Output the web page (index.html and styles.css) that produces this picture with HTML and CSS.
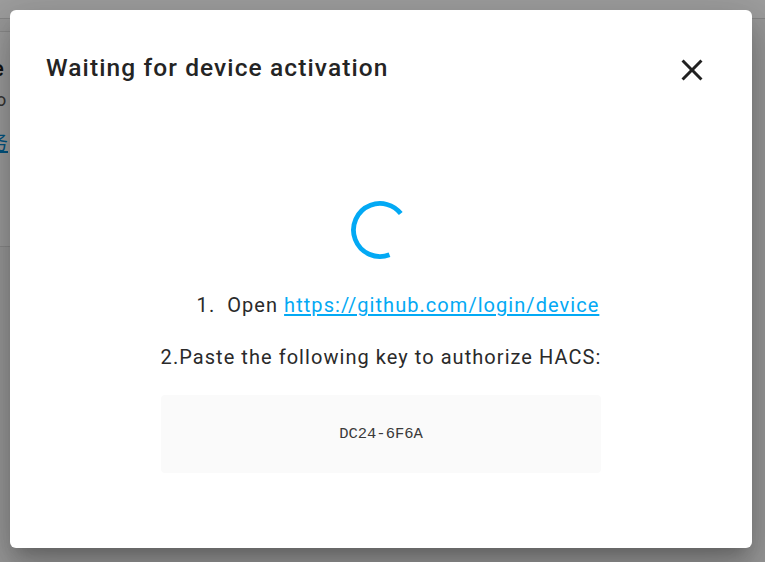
FILE: index.html
```html
<!DOCTYPE html>
<html lang="en">
<head>
<meta charset="utf-8">
<title>Waiting for device activation</title>
<link rel="stylesheet" href="styles.css">
</head>
<body>
<div class="page">
  <div class="page-top"></div>
  <div class="page-card">
    <div class="bg-title">e</div>
    <div class="bg-sub">ro</div>
    <div class="bg-link">务</div>
  </div>
</div>
<div class="scrim"></div>
<div class="dialog" role="dialog">
  <div class="dialog-header">
    <h2 class="dialog-title">Waiting for device activation</h2>
    <button class="close-btn" aria-label="Close">
      <svg viewBox="0 0 24 24" width="36" height="36"><path d="M19,6.41L17.59,5L12,10.59L6.41,5L5,6.41L10.59,12L5,17.59L6.41,19L12,13.41L17.59,19L19,17.59L13.41,12L19,6.41Z"/></svg>
    </button>
  </div>
  <div class="dialog-content">
    <div class="spinner">
      <svg viewBox="0 0 60 60" width="60" height="60">
        <circle cx="30" cy="30" r="26.5" fill="none" stroke="#03a9f4" stroke-width="4.8" stroke-dasharray="116 200" transform="rotate(69 30 30)"/>
      </svg>
    </div>
    <div class="steps">
      <p class="step step-one">1.&nbsp;&nbsp;Open <a href="#">https://github.com/login/device</a></p>
      <p class="step">2.Paste the following key to authorize HACS:</p>
      <div class="code-box"><code>DC24-6F6A</code></div>
    </div>
  </div>
</div>
</body>
</html>
```

FILE: styles.css
```css
html, body {
  margin: 0;
  padding: 0;
  height: 100%;
  overflow: hidden;
}
body {
  background: #f0f0f0;
  font-family: Roboto, "Noto Sans", "Noto Sans CJK SC", sans-serif;
}
.page {
  height: 100%;
  background: #f6f6f6;
}
.page-top {
  height: 18px;
  border-bottom: 1px solid #d8d8d8;
  background: #ffffff;
}
.page-card {
  margin-top: 12px;
  height: 214px;
  border-top: 1px solid #dddddd;
  border-bottom: 1px solid #dddddd;
  background: #fcfcfc;
  position: relative;
  left: -14px;
}
.bg-title {
  font-size: 22px;
  font-weight: 500;
  color: #212121;
  padding-top: 24px;
  padding-left: 6px;
}
.bg-sub {
  font-size: 18px;
  color: #555;
  padding-top: 8px;
  padding-left: 4px;
}
.bg-link {
  font-size: 20px;
  color: #0288d1;
  text-decoration: underline;
  padding-top: 17px;
  padding-left: 2px;
}
.scrim {
  position: absolute;
  inset: 0;
  background: rgba(0, 0, 0, 0.38);
}
.dialog {
  position: absolute;
  left: 10px;
  top: 10px;
  width: 742px;
  height: 538px;
  background: #ffffff;
  border-radius: 6px;
  box-shadow: 0 11px 15px -7px rgba(0,0,0,.2), 0 24px 38px 3px rgba(0,0,0,.14), 0 9px 46px 8px rgba(0,0,0,.12);
  box-sizing: border-box;
  display: flex;
  flex-direction: column;
}
.dialog-header {
  display: flex;
  align-items: flex-start;
  justify-content: space-between;
  padding: 42px 42px 0 36px;
}
.dialog-title {
  margin: 0;
  font-size: 24.5px;
  font-weight: 500;
  line-height: 30px;
  letter-spacing: 1.1px;
  color: #242424;
  margin-top: 1px;
}
.close-btn {
  border: 0;
  background: none;
  padding: 0;
  margin: 0;
  width: 36px;
  height: 36px;
  cursor: pointer;
}
.close-btn svg {
  display: block;
  fill: #212121;
}
.dialog-content {
  display: flex;
  flex-direction: column;
  align-items: center;
  padding-top: 112px;
}
.spinner {
  display: flex;
  justify-content: center;
  width: 60px;
  height: 60px;
  margin-left: -3px;
}
.spinner svg {
  display: block;
}
.steps {
  display: flex;
  flex-direction: column;
  margin-top: 32px;
}
.step {
  margin: 0;
  font-size: 20px;
  line-height: 26px;
  letter-spacing: 1.05px;
  color: #2a2a2a;
}
.step-one {
  padding-left: 36px;
  margin-bottom: 26px;
}
.step a {
  color: #03a9f4;
  text-decoration: underline;
  text-underline-offset: 2px;
}
.code-box {
  margin-top: 25px;
  height: 78px;
  background: #fafafa;
  border-radius: 4px;
  display: flex;
  align-items: center;
  justify-content: center;
}
.code-box code {
  font-family: "Liberation Mono", "DejaVu Sans Mono", monospace;
  font-size: 15.5px;
  color: #3a3a3a;
}
```
